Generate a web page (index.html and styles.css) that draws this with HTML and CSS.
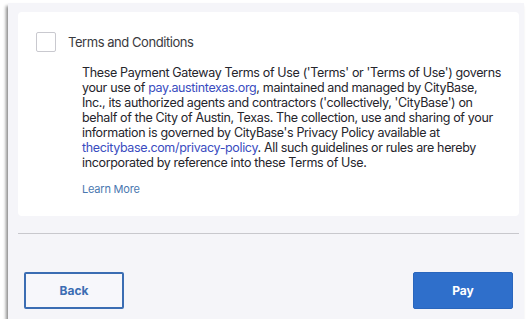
FILE: index.html
```html
<!DOCTYPE html>
<html lang="en">
<head>
<meta charset="utf-8">
<title>Terms and Conditions</title>
<link rel="stylesheet" href="styles.css">
</head>
<body>
<div class="panel">
  <section class="card">
    <label class="terms-row">
      <span class="checkbox"></span>
      <span class="terms-title">Terms and Conditions</span>
    </label>
    <p class="terms-text">These Payment Gateway Terms of Use ('Terms' or 'Terms of Use') governs<br>your use of <a class="link" href="#">pay.austintexas.org</a>, maintained and managed by CityBase,<br>Inc., its authorized agents and contractors ('collectively, 'CityBase') on<br>behalf of the City of Austin, Texas. The collection, use and sharing of your<br>information is governed by CityBase's Privacy Policy available at<br><a class="link" href="#">thecitybase.com/privacy-policy</a>. All such guidelines or rules are hereby<br>incorporated by reference into these Terms of Use.</p>
    <a class="learn-more" href="#">Learn More</a>
  </section>
  <hr class="divider">
  <div class="actions">
    <button class="btn btn-back">Back</button>
    <button class="btn btn-pay">Pay</button>
  </div>
</div>
</body>
</html>
```

FILE: styles.css
```css
html, body {
  margin: 0;
  padding: 0;
  background: #ffffff;
}
body {
  font-family: "Inter", "Liberation Sans", sans-serif;
  color: #2b2b33;
}
.panel {
  margin: 3px 0 0 8px;
  width: 516px;
  height: 316px;
  box-sizing: border-box;
  padding: 9px 5px 0 10px;
  background: #f5f5f9;
  box-shadow: -2px 3px 3px rgba(0, 0, 0, 0.45);
}
.card {
  background: #ffffff;
  border-radius: 4px;
  height: 204px;
  box-sizing: border-box;
  padding: 20px 18px 0 18px;
}
.terms-row {
  display: flex;
  align-items: center;
  gap: 12px;
  height: 20px;
}
.checkbox {
  width: 20px;
  height: 20px;
  box-sizing: border-box;
  border: 1px solid #c9c9cf;
  border-radius: 2px;
  background: #fff;
}
.terms-title {
  font-size: 13px;
  letter-spacing: -0.45px;
  color: #3a3a40;
}
.terms-text {
  margin: 13px 0 0 46px;
  font-size: 12.5px;
  letter-spacing: -0.35px;
  line-height: 15px;
  white-space: nowrap;
  color: #25252c;
}
.link {
  color: #3a4cc0;
  text-decoration: none;
}
.learn-more {
  display: block;
  margin: 12px 0 0 46px;
  font-size: 11px;
  letter-spacing: -0.2px;
  color: #4a78b0;
  text-decoration: none;
}
.divider {
  margin: 17px 0 0 0;
  border: 0;
  border-top: 1px solid #c8c8cd;
  height: 0;
}
.actions {
  display: flex;
  justify-content: space-between;
  margin-top: 38px;
  padding: 0 6px;
}
.btn {
  width: 100px;
  height: 37px;
  box-sizing: border-box;
  border-radius: 2px;
  font-family: "Inter", "Liberation Sans", sans-serif;
  font-size: 12px;
  font-weight: 700;
  cursor: pointer;
}
.btn-back {
  background: #f7f7fb;
  border: 2px solid #3b6db3;
  color: #3b6db3;
}
.btn-pay {
  background: #2f6fcb;
  border: 1px solid #2a66bd;
  color: #ffffff;
}
```
